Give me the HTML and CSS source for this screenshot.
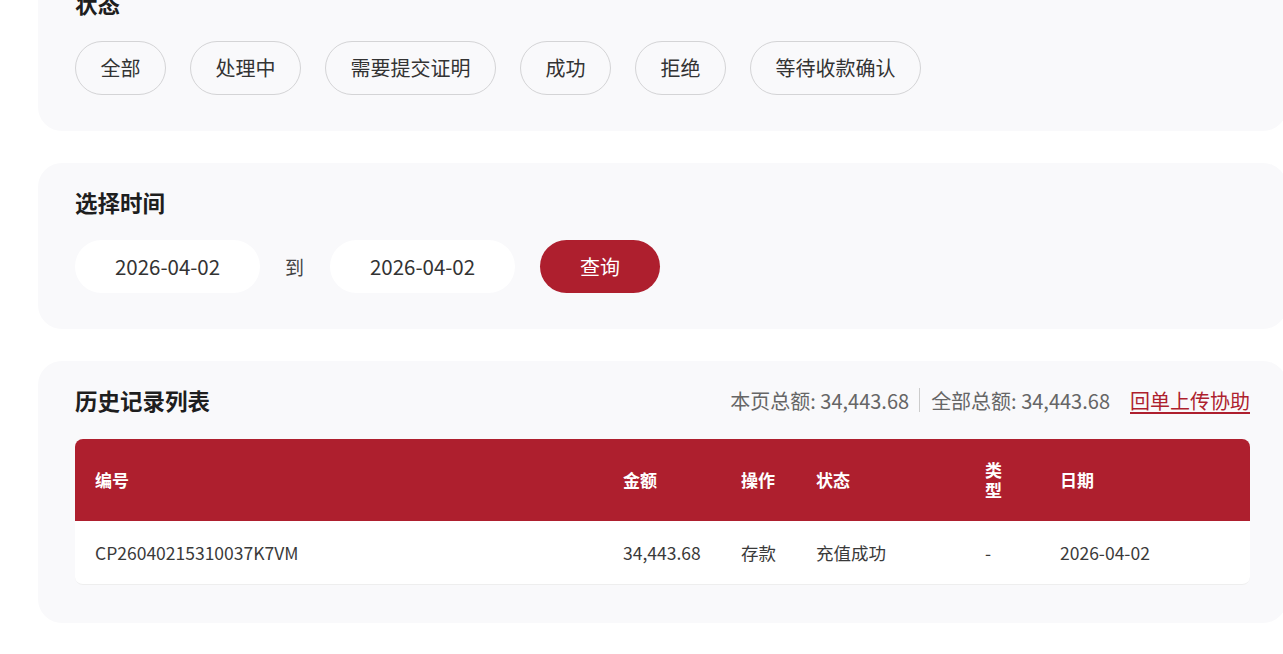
FILE: index.html
```html
<!DOCTYPE html>
<html>
  <head>
    <meta charset="UTF-8">
    <title>历史记录</title>
    <link rel="stylesheet" href="styles.css">
  </head>
  <body>
    <div class="page">
      <!-- 状态筛选 -->
      <div class="card">
        <h3 class="card_title">状态</h3>
        <div class="chips">
          <span class="chip">全部</span>
          <span class="chip">处理中</span>
          <span class="chip">需要提交证明</span>
          <span class="chip">成功</span>
          <span class="chip">拒绝</span>
          <span class="chip">等待收款确认</span>
        </div>
      </div>

      <!-- 时间 -->
      <div class="card">
        <h3 class="card_title">选择时间</h3>
        <div class="date_row">
          <span class="date_box">2026-04-02</span>
          <span class="date_to">到</span>
          <span class="date_box">2026-04-02</span>
          <button class="btn_query">查询</button>
        </div>
      </div>

      <!-- 列表 -->
      <div class="card card_list">
        <div class="list_head">
          <h3 class="card_title">历史记录列表</h3>
          <div class="totals">
            <span>本页总额: 34,443.68</span>
            <span class="sep"></span>
            <span>全部总额: 34,443.68</span>
            <a class="help_link" href="#">回单上传协助</a>
          </div>
        </div>
        <div class="tbl_wrap">
          <table class="tbl">
            <colgroup>
              <col style="width:528px">
              <col style="width:118px">
              <col style="width:75px">
              <col style="width:169px">
              <col style="width:75px">
              <col>
            </colgroup>
            <thead>
              <tr>
                <th>编号</th>
                <th>金额</th>
                <th>操作</th>
                <th>状态</th>
                <th class="th_type">类型</th>
                <th>日期</th>
              </tr>
            </thead>
            <tbody>
              <tr>
                <td>CP26040215310037K7VM</td>
                <td>34,443.68</td>
                <td>存款</td>
                <td>充值成功</td>
                <td>-</td>
                <td>2026-04-02</td>
              </tr>
            </tbody>
          </table>
        </div>
      </div>
    </div>
  </body>
</html>
```

FILE: styles.css
```css
html, body { overflow: hidden; }
body { margin: 0; background: #fff; font-family: "Noto Sans CJK SC", "Noto Sans", sans-serif; color: #333; }

.page { padding-left: 38px; margin-top: -36px; display: flex; flex-direction: column; gap: 32px; }

.card { width: 1249px; box-sizing: border-box; background: #f9f9fb; border-radius: 24px; padding: 24px 37px 36px 37px; }
.card_title { margin: 0; font-size: 22.5px; line-height: 30px; font-weight: bold; color: #1e1e1e; }

.chips { display: flex; gap: 24px; margin-top: 23px; }
.chip { height: 54px; box-sizing: border-box; padding: 0 24.5px; border: 1px solid #d4d4d6; border-radius: 27px; font-size: 20px; line-height: 52px; color: #333; }

.date_row { display: flex; align-items: center; gap: 25px; margin-top: 23px; }
.date_box { width: 185px; height: 53px; background: #fff; border-radius: 27px; text-align: center; font-size: 20.5px; line-height: 53px; color: #333; }
.date_to { width: 20px; font-size: 19px; color: #444; }
.btn_query { width: 120px; height: 53px; border: 0; border-radius: 27px; background: #ae1f2e; color: #fff; font-family: inherit; font-size: 20px; }

.card_list { padding-bottom: 38px; }
.list_head { display: flex; justify-content: space-between; align-items: center; }
.totals { display: flex; align-items: center; font-size: 20px; color: #666; }
.sep { width: 1px; height: 24px; background: #ccc; margin: 0 11px 0 10px; }
.help_link { margin-left: 20px; color: #ae1f2e; text-decoration: underline; text-underline-offset: 3px; }

.tbl_wrap { margin-top: 24px; background: #fff; border-radius: 8px; overflow: hidden; border-bottom: 1px solid #eee; }
.tbl { width: 100%; border-collapse: collapse; table-layout: fixed; }
.tbl th { background: #ae1f2e; color: #fff; font-size: 17px; font-weight: bold; text-align: left; height: 82px; padding: 0 0 0 20px; line-height: 20px; }
.tbl th.th_type { padding-right: 36px; }
.tbl td { height: 63px; padding: 0 0 0 20px; font-size: 17.5px; color: #3a3a3a; }
```
